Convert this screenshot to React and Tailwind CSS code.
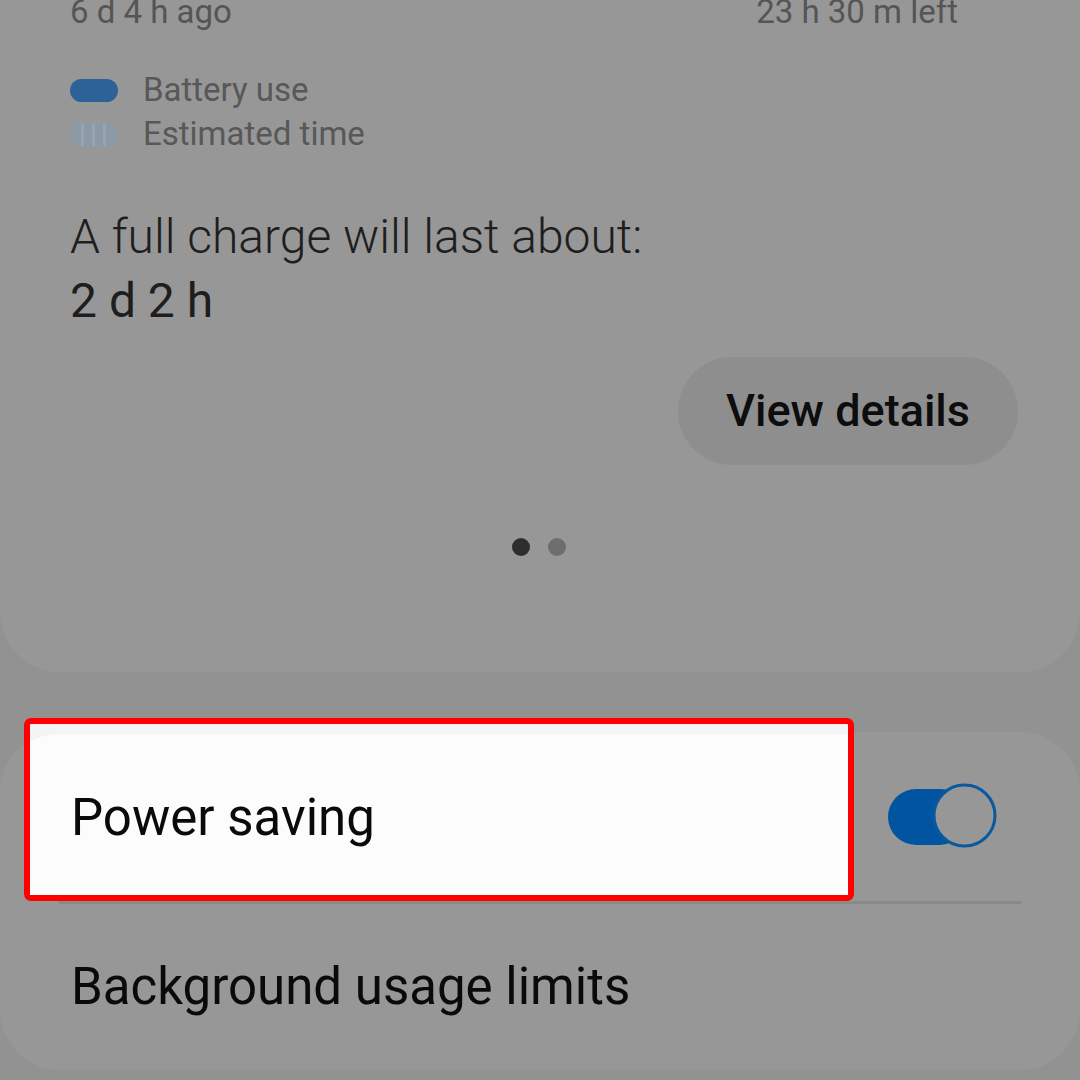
import React from 'react';

function Toggle() {
    return (
        <svg width="112" height="68" viewBox="0 0 112 68">
            <rect x="2" y="6" width="80" height="56" rx="28" fill="#0054a0" />
            <circle cx="78.5" cy="32.5" r="30.5" fill="#979797" stroke="#0a58a0" strokeWidth="3" />
        </svg>
    );
}

function EstimatedPill() {
    return (
        <svg width="48" height="23" viewBox="0 0 48 23">
            <defs>
                <clipPath id="pill">
                    <rect x="0" y="0" width="48" height="23" rx="11.5" />
                </clipPath>
            </defs>
            <g clipPath="url(#pill)">
                <rect x="0" y="0" width="48" height="23" fill="#8c9aa7" />
                <rect x="11" y="0" width="3" height="23" fill="#97a3ad" />
                <rect x="22" y="0" width="3" height="23" fill="#97a3ad" />
                <rect x="33" y="0" width="3" height="23" fill="#97a3ad" />
            </g>
        </svg>
    );
}

export default function App() {
    return (
        <div className="relative w-[1080px] h-[1080px] overflow-hidden bg-[#929292] font-['Roboto',sans-serif]">
            {/* Battery card */}
            <div className="h-[672px] bg-[#979797] rounded-b-[60px] flex flex-col">
                <div className="-mt-[12px] h-[48px] flex items-center justify-between pl-[70px] pr-[122px] text-[33px] text-[#555555]">
                    <span>6 d 4 h ago</span>
                    <span>23 h 30 m left</span>
                </div>

                <div className="mt-[32px] h-[44px] flex items-center pl-[70px]">
                    <div className="w-[48px] h-[23px] rounded-full bg-[#2d6298]" />
                    <span className="ml-[25px] text-[33px] text-[#585858]">Battery use</span>
                </div>
                <div className="h-[44px] flex items-center pl-[70px]">
                    <EstimatedPill />
                    <span className="ml-[25px] text-[33px] text-[#585858]">Estimated time</span>
                </div>

                <div className="mt-[51px] h-[60px] flex items-center pl-[70px] text-[48px] font-light text-[#1e1e1e]">
                    A full charge will last about:
                </div>
                <div className="mt-[4px] h-[60px] flex items-center pl-[70px] text-[48px] text-[#1e1e1e]">
                    2 d 2 h
                </div>

                <div className="mt-[26px] flex justify-end pr-[62px]">
                    <button className="w-[340px] h-[108px] rounded-full bg-[#8e8e8e] text-[45px] font-medium text-[#0d0d0d]">
                        View details
                    </button>
                </div>

                <div className="mt-[72px] h-[20px] flex items-center justify-center gap-[18px] pr-[2px]">
                    <div className="w-[18px] h-[18px] rounded-full bg-[#2e2e2e]" />
                    <div className="w-[18px] h-[18px] rounded-full bg-[#6e6e6e]" />
                </div>
            </div>

            {/* Settings card */}
            <div className="mt-[60px] h-[338px] bg-[#979797] rounded-[60px] flex flex-col">
                <div className="h-[169px] flex items-center justify-between pl-[71px] pr-[82px]">
                    <span className="relative z-[2] mt-[4px] text-[51px] text-[#0a0a0a]">Power saving</span>
                    <Toggle />
                </div>
                <div className="mx-[58px] h-[3px] bg-[#8a8a8a]" />
                <div className="flex-1 flex items-center pl-[71px]">
                    <span className="text-[51px] text-[#0a0a0a]">Background usage limits</span>
                </div>
            </div>

            {/* Highlight */}
            <div className="absolute z-[1] left-[24px] top-[718px] w-[830px] h-[183px] border-[6px] border-[#ff0000] rounded-[7px] bg-[#f4f4f4] overflow-hidden flex flex-col">
                <div className="mt-[10px] -ml-[30px] flex-1 bg-[#fcfcfc] rounded-tl-[60px]" />
            </div>
        </div>
    );
}
